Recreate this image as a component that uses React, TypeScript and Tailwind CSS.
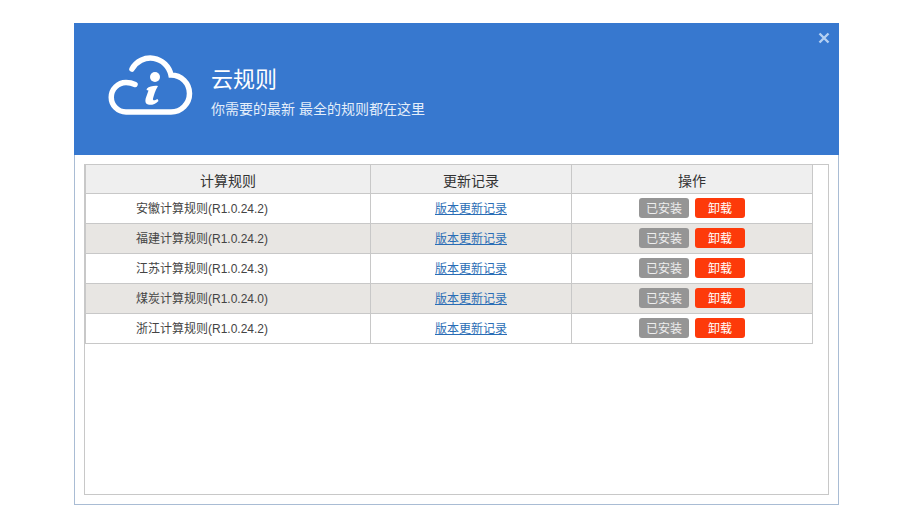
const FONT = "font-['Liberation_Sans','Noto_Sans_CJK_SC',sans-serif]";

const rows = [
  { name: "安徽计算规则(R1.0.24.2)", alt: false },
  { name: "福建计算规则(R1.0.24.2)", alt: true },
  { name: "江苏计算规则(R1.0.24.3)", alt: false },
  { name: "煤炭计算规则(R1.0.24.0)", alt: true },
  { name: "浙江计算规则(R1.0.24.2)", alt: false },
];

function Cloud() {
  return (
    <svg width="100" height="80" viewBox="0 0 100 80" fill="none" className="mt-[-4px] shrink-0">
      <path
        d="M32 24A21 21 0 0 1 71 30A18.5 18.5 0 0 1 71 67L26 67A14.75 14.75 0 0 1 26 37.5C29 37.5 32 38 35 39.5"
        stroke="#fff"
        strokeWidth="5.5"
        strokeLinecap="round"
      />
      <circle cx="55" cy="32" r="5" fill="#fff" />
      <path
        d="M47 43.5C49 41.5 54 40.5 58 41C55 46 54 50 53 53.5C52.5 55.5 54 56 57.5 54L58.5 56C55 59.5 51 60.5 48 59.5C45 58.5 45 55.5 46 52.5L48.5 45.5L46.5 45Z"
        fill="#fff"
      />
    </svg>
  );
}

export default function App() {
  return (
    <div className={`${FONT} h-[523px] w-[911px] bg-white pl-[74px] pt-[23px]`}>
      <div className="flex h-[482px] w-[765px] flex-col border border-t-0 border-[#a9bcd4] bg-white">
        <header className="relative -mx-px flex h-[132px] shrink-0 items-center bg-[#3778cf] pb-[4px] pl-[26px] text-white">
          <Cloud />
          <div className="ml-[11px] mt-[9px] flex flex-col">
            <h1 className="text-[22px] leading-[30px] font-normal">云规则</h1>
            <p className="mt-[4px] text-[14px] leading-[20px] text-[#e4eefa]">你需要的最新 最全的规则都在这里</p>
          </div>
          <svg width="12" height="12" viewBox="0 0 12 12" className="absolute top-[9px] right-[9px]">
            <path d="M1.5 1.5L10.5 10.5M10.5 1.5L1.5 10.5" stroke="#b5d0f2" strokeWidth="2.4" />
          </svg>
        </header>
        <div className="mx-[9px] mt-[9px] h-[331px] border border-[#c8c8c8] bg-white">
          <table className="w-[727px] table-fixed border-collapse text-[12px] text-[#444]">
            <colgroup>
              <col className="w-[285px]" />
              <col className="w-[201px]" />
              <col className="w-[241px]" />
            </colgroup>
            <thead>
              <tr className="h-[28px] bg-[#efefef] text-[14px] text-[#333]">
                <th className="border border-t-0 border-[#c8c8c8] pt-[5px] font-normal">计算规则</th>
                <th className="border border-t-0 border-[#c8c8c8] pt-[5px] font-normal">更新记录</th>
                <th className="border border-t-0 border-[#c8c8c8] pt-[5px] font-normal">操作</th>
              </tr>
            </thead>
            <tbody>
              {rows.map((r) => (
                <tr key={r.name} className={r.alt ? "h-[30px] bg-[#e8e6e3]" : "h-[30px] bg-white"}>
                  <td className="border border-[#c8c8c8] pl-[50px] pt-[2px]">{r.name}</td>
                  <td className="border border-[#c8c8c8] pt-[2px] text-center">
                    <a href="#" className="text-[#2a6db5] underline">版本更新记录</a>
                  </td>
                  <td className="border border-[#c8c8c8]">
                    <div className="flex justify-center gap-[6px]">
                      <button className="h-[20px] w-[50px] rounded-[3px] bg-[#959595] pt-[1px] text-[12px] leading-[20px] text-[#eee]">已安装</button>
                      <button className="h-[20px] w-[50px] rounded-[3px] bg-[#fd3a0a] pt-[1px] text-[12px] leading-[20px] text-white">卸载</button>
                    </div>
                  </td>
                </tr>
              ))}
            </tbody>
          </table>
        </div>
      </div>
    </div>
  );
}
